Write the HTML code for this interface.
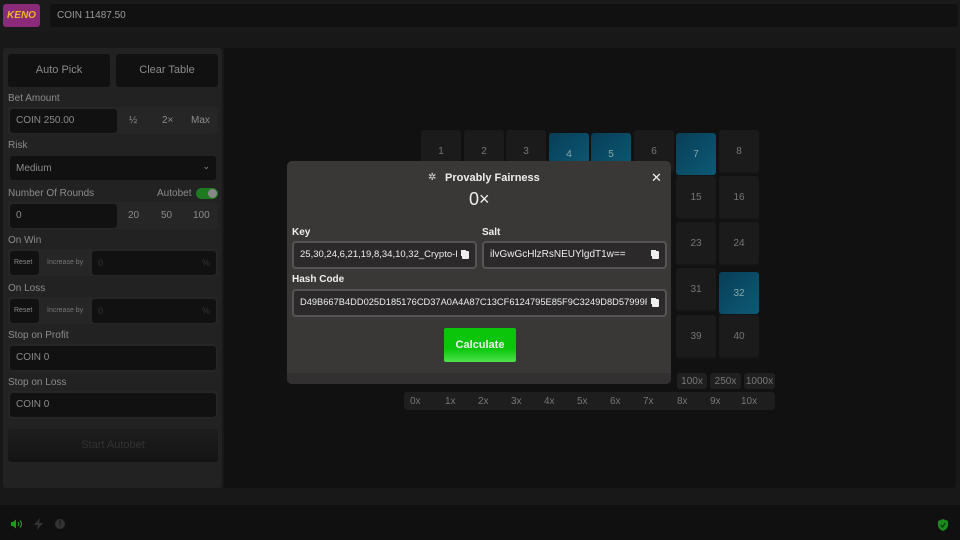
<!DOCTYPE html>
<html><head><style>
*{box-sizing:border-box;margin:0;padding:0}
body{width:960px;height:540px;background:#181818;font-family:"Liberation Sans",sans-serif;color:#8a8a8a;position:relative;overflow:hidden;font-size:11px}
.a{position:absolute}
.f{background:#111;border-radius:3px}
.lbl{font-size:10px;color:#8c8c8c}
.t{position:absolute;width:40px;height:42px;background:#1b1b1b;border-radius:3px;color:#777;font-size:10px;display:flex;align-items:center;justify-content:center;box-shadow:0 2px 0 #151515}
.b{background:linear-gradient(135deg,#083e56,#0d5a76);color:#8aa;top:133px!important}
.m{position:absolute;height:16px;background:#202020;border-radius:3px;font-size:10px;color:#777;display:flex;align-items:center;justify-content:center}
.in{position:absolute;background:#2b2929;border:2px solid #555;border-radius:4px;height:28px;color:#eee;font-size:10px;padding:0 6px}
.in .tx{position:absolute;left:6px;right:18px;top:6px;white-space:nowrap;overflow:hidden}
.cp{position:absolute;right:4px;top:0;width:12px;height:24px}
.cp:after{content:"";position:absolute;left:3px;top:8px;width:7px;height:8px;background:#eee;border-radius:1px;box-shadow:-2px -2px 0 -1px #eee}
</style></head><body>
<div class="a" style="left:0;top:0;width:960px;height:31px;background:#1a1a1a"></div>
<div class="a" style="left:3px;top:4px;width:37px;height:23px;background:#8a2a78;border-radius:3px;color:#e9b82d;font-weight:bold;font-size:10px;text-align:center;line-height:23px;font-style:italic">KENO</div>
<div class="a f" style="left:50px;top:4px;width:908px;height:23px;color:#9a9a9a;font-size:10px;padding:6px 7px">COIN 11487.50</div>

<div class="a" style="left:3px;top:48px;width:219px;height:440px;background:#222;border-radius:3px"></div>
<div class="a f" style="left:8px;top:54px;width:102px;height:33px;color:#8a8a8a;font-size:11px;text-align:center;line-height:33px">Auto Pick</div>
<div class="a f" style="left:116px;top:54px;width:102px;height:33px;color:#8a8a8a;font-size:11px;text-align:center;line-height:33px">Clear Table</div>
<div class="a lbl" style="left:8px;top:93px">Bet Amount</div>
<div class="a" style="left:8px;top:107px;width:210px;height:27px;background:#262626;border-radius:3px"></div>
<div class="a f" style="left:10px;top:109px;width:107px;height:24px;font-size:10px;padding:6px 6px;color:#8a8a8a">COIN 250.00</div>
<div class="a lbl" style="left:129px;top:115px">½</div><div class="a lbl" style="left:162px;top:115px">2×</div><div class="a lbl" style="left:191px;top:115px">Max</div>
<div class="a lbl" style="left:8px;top:140px">Risk</div>
<div class="a f" style="left:10px;top:156px;width:206px;height:24px;font-size:10px;padding:7px 6px;color:#8a8a8a">Medium<span style="position:absolute;right:6px;top:5px;font-size:9px">⌄</span></div>
<div class="a lbl" style="left:8px;top:188px">Number Of Rounds</div>
<div class="a lbl" style="left:157px;top:188px">Autobet</div>
<div class="a" style="left:196px;top:188px;width:22px;height:11px;background:#1e7a1e;border-radius:6px"><div style="position:absolute;right:1px;top:1px;width:9px;height:9px;background:#888;border-radius:50%"></div></div>
<div class="a" style="left:8px;top:202px;width:210px;height:27px;background:#262626;border-radius:3px"></div>
<div class="a f" style="left:10px;top:204px;width:107px;height:24px;font-size:10px;padding:6px 6px;color:#8a8a8a">0</div>
<div class="a lbl" style="left:128px;top:210px">20</div><div class="a lbl" style="left:161px;top:210px">50</div><div class="a lbl" style="left:193px;top:210px">100</div>
<div class="a lbl" style="left:8px;top:235px">On Win</div>
<div class="a" style="left:8px;top:249px;width:210px;height:27px;background:#262626;border-radius:3px"></div>
<div class="a f" style="left:10px;top:251px;width:29px;height:24px;font-size:7px;padding:8px 4px;color:#8a8a8a">Reset</div>
<div class="a" style="left:47px;top:259px;font-size:7px;color:#777">Increase by</div>
<div class="a f" style="left:92px;top:251px;width:124px;height:24px;font-size:9px;padding:7px 6px;color:#333">0<span style="position:absolute;right:6px">%</span></div>
<div class="a lbl" style="left:8px;top:283px">On Loss</div>
<div class="a" style="left:8px;top:297px;width:210px;height:27px;background:#262626;border-radius:3px"></div>
<div class="a f" style="left:10px;top:299px;width:29px;height:24px;font-size:7px;padding:8px 4px;color:#8a8a8a">Reset</div>
<div class="a" style="left:47px;top:307px;font-size:7px;color:#777">Increase by</div>
<div class="a f" style="left:92px;top:299px;width:124px;height:24px;font-size:9px;padding:7px 6px;color:#333">0<span style="position:absolute;right:6px">%</span></div>
<div class="a lbl" style="left:8px;top:330px">Stop on Profit</div>
<div class="a f" style="left:10px;top:346px;width:206px;height:24px;font-size:10px;padding:6px 6px;color:#8a8a8a;box-shadow:0 0 0 2px #262626">COIN 0</div>
<div class="a lbl" style="left:8px;top:377px">Stop on Loss</div>
<div class="a f" style="left:10px;top:393px;width:206px;height:24px;font-size:10px;padding:6px 6px;color:#8a8a8a;box-shadow:0 0 0 2px #262626">COIN 0</div>
<div class="a" style="left:8px;top:429px;width:210px;height:33px;background:linear-gradient(#1d1d1d,#141414);border-radius:3px;color:#333;font-size:11px;text-align:center;line-height:33px">Start Autobet</div>

<div class="a" style="left:224px;top:48px;width:732px;height:440px;background:#121112;border-radius:0 0 4px 0"></div>
<div class="a" style="left:0;top:505px;width:960px;height:35px;background:#101010"></div>
<svg class="a" style="left:10px;top:519px" width="12" height="10" viewBox="0 0 12 10"><path d="M1 3h2l3-2.5v9L3 7H1z" fill="#1d9a1d"/><path d="M8 3q1.5 2 0 4M10 1.5q3 3.5 0 7" stroke="#1d9a1d" fill="none" stroke-width="1.2"/></svg>
<svg class="a" style="left:34px;top:518px" width="9" height="12" viewBox="0 0 9 12"><path d="M6 0L0 7h4l-1 5 6-7H5z" fill="#333"/></svg>
<div class="a" style="left:55px;top:519px;width:10px;height:10px;border-radius:50%;background:#333;color:#111;font-size:8px;text-align:center;line-height:10px;font-weight:bold">!</div>
<svg class="a" style="left:937px;top:519px" width="12" height="12" viewBox="0 0 12 12"><path d="M6 0L11 2v4q0 4-5 6Q1 10 1 6V2z" fill="#1d8a1d"/><path d="M3.5 6l2 2 3-4" stroke="#0d3a0d" stroke-width="1.3" fill="none"/></svg>

<div class="t" style="left:421px;top:130px">1</div><div class="t" style="left:464px;top:130px">2</div><div class="t" style="left:506px;top:130px">3</div><div class="t b" style="left:549px;top:130px">4</div><div class="t b" style="left:591px;top:130px">5</div><div class="t" style="left:634px;top:130px">6</div><div class="t b" style="left:676px;top:130px">7</div><div class="t" style="left:719px;top:130px">8</div>
<div class="t" style="left:676px;top:176px">15</div><div class="t" style="left:719px;top:176px">16</div>
<div class="t" style="left:676px;top:222px">23</div><div class="t" style="left:719px;top:222px">24</div>
<div class="t" style="left:676px;top:268px">31</div><div class="t" style="left:719px;top:272px;background:linear-gradient(135deg,#083e56,#0d5a76);color:#8aa">32</div>
<div class="t" style="left:676px;top:315px">39</div><div class="t" style="left:719px;top:315px">40</div>
<div class="m" style="left:677px;top:373px;width:30px">100x</div><div class="m" style="left:710px;top:373px;width:31px">250x</div><div class="m" style="left:744px;top:373px;width:31px">1000x</div>
<div class="a" style="left:404px;top:392px;width:371px;height:18px;background:#1e1e1e;border-radius:3px"></div>
<div class="a" style="left:410px;top:396px;font-size:10px;color:#777">0x</div>
<div class="a" style="left:445px;top:396px;font-size:10px;color:#777">1x</div><div class="a" style="left:478px;top:396px;font-size:10px;color:#777">2x</div><div class="a" style="left:511px;top:396px;font-size:10px;color:#777">3x</div><div class="a" style="left:544px;top:396px;font-size:10px;color:#777">4x</div><div class="a" style="left:577px;top:396px;font-size:10px;color:#777">5x</div><div class="a" style="left:610px;top:396px;font-size:10px;color:#777">6x</div><div class="a" style="left:643px;top:396px;font-size:10px;color:#777">7x</div><div class="a" style="left:677px;top:396px;font-size:10px;color:#777">8x</div><div class="a" style="left:710px;top:396px;font-size:10px;color:#777">9x</div><div class="a" style="left:741px;top:396px;font-size:10px;color:#777">10x</div>

<div class="a" style="left:287px;top:161px;width:384px;height:223px;background:#3a3837;border-radius:5px;overflow:hidden">
<div class="a" style="left:0;top:212px;width:384px;height:11px;background:#323030"></div>
</div>
<div class="a" style="left:428px;top:172px;color:#ddd;font-size:10px">✲</div>
<div class="a" style="left:445px;top:172px;color:#eee;font-size:11px;font-weight:bold">Provably Fairness</div>
<div class="a" style="left:651px;top:170px;color:#eee;font-size:13px">✕</div>
<div class="a" style="left:469px;top:189px;color:#eee;font-size:18px">0×</div>
<div class="a" style="left:292px;top:227px;color:#eee;font-size:10px;font-weight:bold">Key</div>
<div class="a" style="left:482px;top:227px;color:#eee;font-size:10px;font-weight:bold">Salt</div>
<div class="in" style="left:292px;top:241px;width:185px;font-size:9.5px"><span class="tx">25,30,24,6,21,19,8,34,10,32_Crypto-Keno</span><span class="cp"></span></div>
<div class="in" style="left:482px;top:241px;width:185px"><span class="tx">ilvGwGcHlzRsNEUYlgdT1w==</span><span class="cp"></span></div>
<div class="a" style="left:292px;top:274px;color:#eee;font-size:10px;font-weight:bold">Hash Code</div>
<div class="in" style="left:292px;top:289px;width:375px;font-size:9.3px"><span class="tx">D49B667B4DD025D185176CD37A0A4A87C13CF6124795E85F9C3249D8D57999F1A</span><span class="cp"></span></div>
<div class="a" style="left:444px;top:328px;width:72px;height:34px;background:linear-gradient(#0ac50a 60%,#4de24d);border-radius:2px;color:#eee;font-weight:bold;font-size:11px;text-align:center;line-height:34px">Calculate</div>
</body></html>
